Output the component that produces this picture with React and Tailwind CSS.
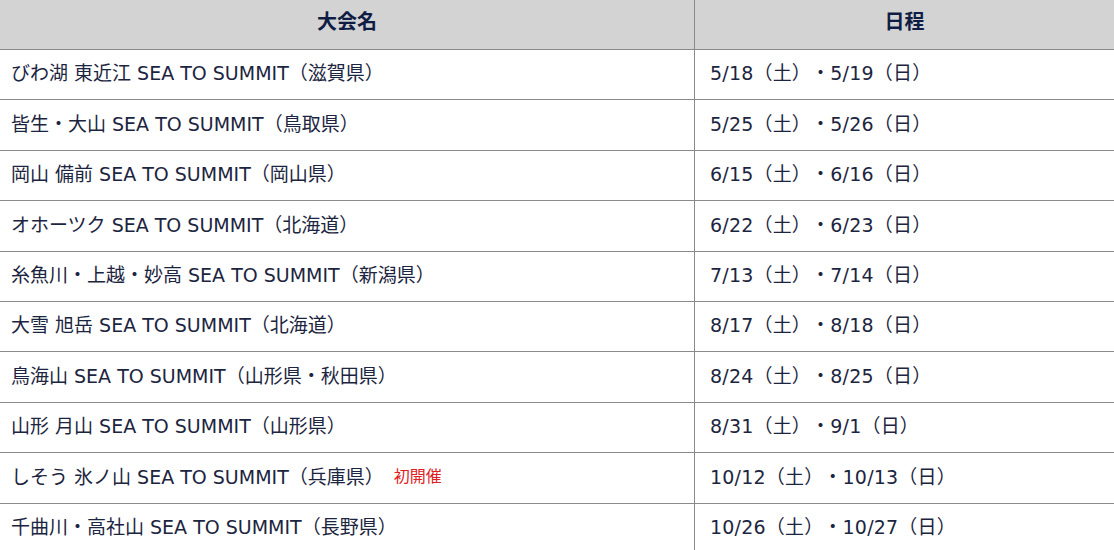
const rows = [
  ["びわ湖 東近江 SEA TO SUMMIT（滋賀県）", "5/18（土）・5/19（日）"],
  ["皆生・大山 SEA TO SUMMIT（鳥取県）", "5/25（土）・5/26（日）"],
  ["岡山 備前 SEA TO SUMMIT（岡山県）", "6/15（土）・6/16（日）"],
  ["オホーツク SEA TO SUMMIT（北海道）", "6/22（土）・6/23（日）"],
  ["糸魚川・上越・妙高 SEA TO SUMMIT（新潟県）", "7/13（土）・7/14（日）"],
  ["大雪 旭岳 SEA TO SUMMIT（北海道）", "8/17（土）・8/18（日）"],
  ["鳥海山 SEA TO SUMMIT（山形県・秋田県）", "8/24（土）・8/25（日）"],
  ["山形 月山 SEA TO SUMMIT（山形県）", "8/31（土）・9/1（日）"],
  ["しそう 氷ノ山 SEA TO SUMMIT（兵庫県）", "10/12（土）・10/13（日）", true],
  ["千曲川・高社山 SEA TO SUMMIT（長野県）", "10/26（土）・10/27（日）"],
];

export default function App() {
  return (
    <div
      className="w-[1114px] h-[550px] overflow-hidden bg-white text-[#1c2540] [text-spacing-trim:space-all]"
      style={{ fontFamily: '"DejaVu Sans", "Noto Sans CJK JP", sans-serif' }}
    >
      <div className="grid grid-cols-[695px_1fr] h-[50px] bg-[#d3d3d3] border-b border-[#8a8a8a] text-[20px] font-bold text-[#0f1d45]">
        <div className="flex items-center justify-center pb-[5px] border-r border-[#8a8a8a]">大会名</div>
        <div className="flex items-center justify-center pb-[5px]">日程</div>
      </div>
      {rows.map(([name, date, isNew]) => (
        <div
          key={name}
          className="grid grid-cols-[695px_1fr] h-[50.4px] border-b border-[#8a8a8a] text-[19px]"
        >
          <div className="flex items-center pl-[11px] pb-[2px] border-r border-[#8a8a8a] whitespace-nowrap">
            {name}
            {isNew && <span className="ml-[10px] text-[16px] text-[#e02020]">初開催</span>}
          </div>
          <div className="flex items-center pl-[15px] pb-[2px] whitespace-nowrap tracking-[0.2px]">{date}</div>
        </div>
      ))}
    </div>
  );
}
